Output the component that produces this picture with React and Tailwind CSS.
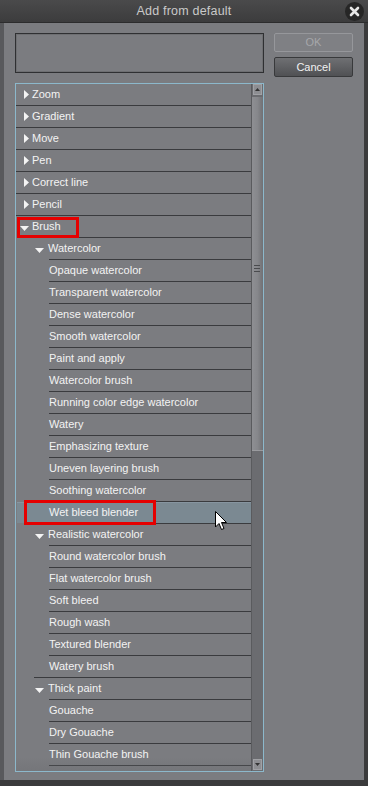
const items = [
  ['Zoom', 0, 'c'],
  ['Gradient', 0, 'c'],
  ['Move', 0, 'c'],
  ['Pen', 0, 'c'],
  ['Correct line', 0, 'c'],
  ['Pencil', 0, 'c'],
  ['Brush', 0, 'e'],
  ['Watercolor', 1, 'e'],
  ['Opaque watercolor', 2],
  ['Transparent watercolor', 2],
  ['Dense watercolor', 2],
  ['Smooth watercolor', 2],
  ['Paint and apply', 2],
  ['Watercolor brush', 2],
  ['Running color edge watercolor', 2],
  ['Watery', 2],
  ['Emphasizing texture', 2],
  ['Uneven layering brush', 2],
  ['Soothing watercolor', 2],
  ['Wet bleed blender', 2, null, true],
  ['Realistic watercolor', 1, 'e'],
  ['Round watercolor brush', 2],
  ['Flat watercolor brush', 2],
  ['Soft bleed', 2],
  ['Rough wash', 2],
  ['Textured blender', 2],
  ['Watery brush', 2],
  ['Thick paint', 1, 'e'],
  ['Gouache', 2],
  ['Dry Gouache', 2],
  ['Thin Gouache brush', 2],
  ['', 2],
]

const indent = ['ml-0', 'ml-[18px]', 'ml-[33px]']

const Collapsed = () => (
  <svg width="5" height="9" viewBox="0 0 5 9" className="ml-[8px] mr-[3px] shrink-0">
    <path d="M0 0 L5 4.5 L0 9 Z" fill="#f4f4f4" />
  </svg>
)

const Expanded = ({ level }) => (
  <svg
    width="9"
    height="5"
    viewBox="0 0 9 5"
    className={level === 0 ? 'ml-[4px] mr-[3px] mt-[3px] shrink-0' : 'ml-[1px] mr-[4px] mt-[3px] shrink-0'}
  >
    <path d="M0 0 L9 0 L4.5 5 Z" fill="#f4f4f4" />
  </svg>
)

const Row = ({ label, level, state, active, first }) => (
  <div className={`${first ? 'h-[21px]' : 'h-[22px]'} shrink-0 flex relative`}>
    {active && (
      <div className="absolute left-px right-0 top-px bottom-0 bg-[#7b8992] border-t border-[#8795a0]" />
    )}
    <div
      className={`relative flex-1 flex items-center ${indent[level]} ${first ? '' : 'border-t border-[#3a3b3e]'}`}
    >
      {state === 'c' && <Collapsed />}
      {state === 'e' && <Expanded level={level} />}
      <span className="text-[11px] leading-none text-[#f3f3f3] whitespace-nowrap">{label}</span>
    </div>
  </div>
)

const Scrollbar = () => (
  <div className="w-[12px] shrink-0 flex flex-col bg-[#6b6c70] border-l border-[#5a5b5e]">
    <div className="h-[11px] shrink-0 mx-px bg-[#8d8e92] border border-[#a0a1a5] flex items-center justify-center">
      <svg width="5" height="3" viewBox="0 0 5 3"><path d="M2.5 0 L5 3 L0 3 Z" fill="#333" /></svg>
    </div>
    <div className="h-[2px] shrink-0" />
    <div className="h-[354px] shrink-0 bg-gradient-to-r from-[#8e8f93] via-[#86878b] to-[#707175] border-b border-[#9a9b9f] flex flex-col items-center justify-center">
      <div className="flex flex-col gap-[2px] mt-[-10px] mr-[2px]">
        <div className="w-[6px] h-px bg-[#4a4b4e]" />
        <div className="w-[6px] h-px bg-[#4a4b4e]" />
        <div className="w-[6px] h-px bg-[#4a4b4e]" />
      </div>
    </div>
    <div className="flex-1" />
    <div className="h-[11px] shrink-0 mx-px mb-px bg-[#8d8e92] border border-[#a0a1a5] flex items-center justify-center">
      <svg width="5" height="3" viewBox="0 0 5 3"><path d="M0 0 L5 0 L2.5 3 Z" fill="#333" /></svg>
    </div>
  </div>
)

const Cursor = () => (
  <svg width="13" height="20" viewBox="0 0 13 20" className="absolute left-[199px] top-[427px]">
    <path d="M0.5 0.5 L0.5 16 L4 12.5 L6.5 18.5 L9 17.5 L6.5 11.5 L11.5 11.5 Z" fill="#fff" stroke="#000" strokeWidth="1" />
  </svg>
)

export default function App() {
  return (
    <div
      className="w-[368px] h-[786px] bg-[#3b3b3c] flex flex-col overflow-hidden"
      style={{ fontFamily: '"Liberation Sans", Arial, sans-serif' }}
    >
      <div className="relative h-[23px] shrink-0 bg-gradient-to-b from-[#4a4a4b] to-[#3c3c3d] border-b border-[#2c2c2d] flex items-center justify-center">
        <span className="text-[12.5px] text-[#c9c9c9] tracking-[0.2px]">Add from default</span>
        <div className="absolute right-[4px] top-[2px] w-[19px] h-[19px] rounded-full bg-[#262626] flex items-center justify-center">
          <svg width="11" height="11" viewBox="0 0 11 11">
            <path d="M2 2 L9 9 M9 2 L2 9" stroke="#e6e6e6" strokeWidth="2.6" strokeLinecap="round" />
          </svg>
        </div>
      </div>

      <div className="flex-1 flex mb-[6px]">
        <div className="w-[4px] bg-[#58595c]" />
        <div className="flex-1 bg-[#7b7c80] pl-[11px] pt-[10px] flex">
          <div className="w-[249px] flex flex-col">
            <div className="h-[40px] shrink-0 border border-[#2f3032] shadow-[inset_0_0_0_1px_#6e6f72]" />
            <div className="relative mt-[10px] h-[689px] shrink-0 border border-[#8cb8cb] flex overflow-hidden">
              <div className="flex-1 flex flex-col overflow-hidden">
                {items.map(([label, level, state, active], i) => (
                  <Row key={i} label={label} level={level} state={state} active={active} first={i === 0} />
                ))}
              </div>
              <Scrollbar />
              <div className="absolute left-0 right-[12px] bottom-0 h-[14px] bg-gradient-to-b from-transparent to-[#6c6d71]/40 pointer-events-none" />
              <div className="absolute left-[1px] top-[133px] w-[62px] h-[21px] border-[3px] border-[#e50000]" />
              <div className="absolute left-[8px] top-[416px] w-[132px] h-[25px] border-[3px] border-[#e50000]" />
              <Cursor />
            </div>
          </div>
          <div className="ml-[10px] w-[79px] flex flex-col gap-[5px]">
            <div className="h-[19px] bg-[#7f8084] border border-[#96979b] rounded-[2px] flex items-center justify-center">
              <span className="text-[11px] text-[#a6a7aa]">OK</span>
            </div>
            <div className="h-[20px] bg-gradient-to-b from-[#6f7073] to-[#505154] border border-[#38393b] rounded-[2px] flex items-center justify-center">
              <span className="text-[11px] text-[#f2f2f2]">Cancel</span>
            </div>
          </div>
        </div>
        <div className="w-[4px] bg-[#3b3b3c]" />
      </div>
    </div>
  )
}
